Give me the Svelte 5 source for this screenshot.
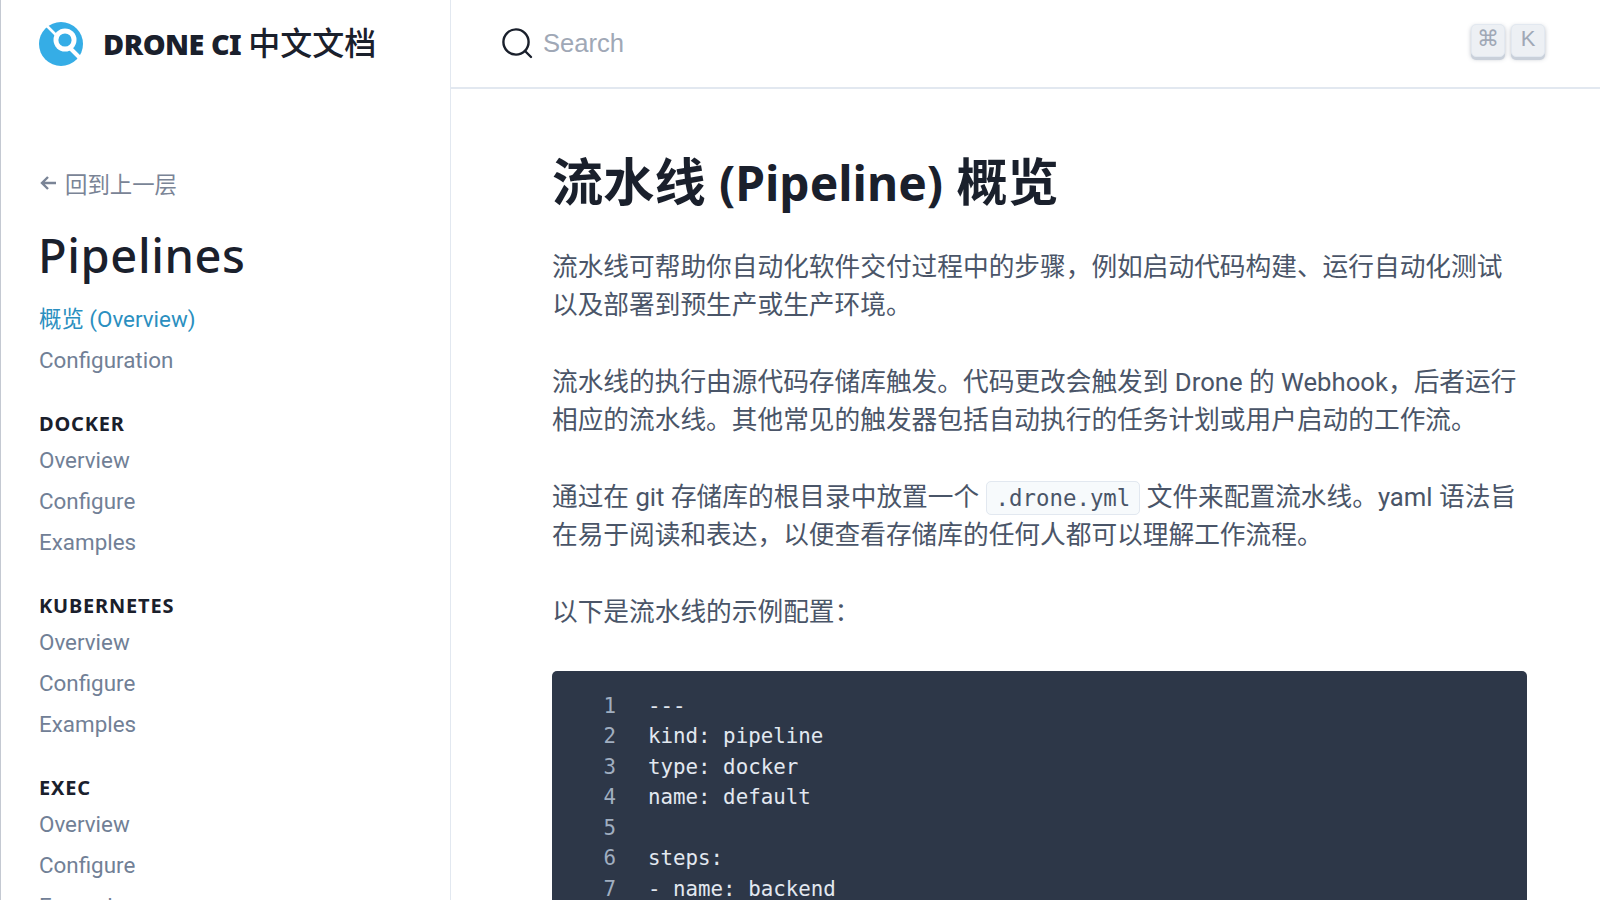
<script>
  const groups = [
    { title: "DOCKER", links: ["Overview", "Configure", "Examples"] },
    { title: "KUBERNETES", links: ["Overview", "Configure", "Examples"] },
    { title: "EXEC", links: ["Overview", "Configure", "Examples"] },
  ];

  const code = ["---", "kind: pipeline", "type: docker", "name: default", "", "steps:", "- name: backend"];
</script>

<div class="page">
  <aside class="sidebar">
    <a class="brand" href="#top">
      <svg class="logo" viewBox="0 0 44 44" width="44" height="44">
        <circle cx="22" cy="22" r="22" fill="#35ade6" />
        <path d="M7 3 L40 36" stroke="#fff" stroke-width="2.6" />
        <circle cx="26" cy="18" r="11.5" fill="#fff" />
        <circle cx="26" cy="18" r="6.6" fill="#35ade6" />
        <path d="M31 25 L43 37" stroke="#fff" stroke-width="2.6" />
      </svg>
      <span class="brand-text">DRONE CI <span class="brand-cjk">中文文档</span></span>
    </a>

    <a class="back" href="#top">
      <svg viewBox="0 0 16 16" width="16" height="16" fill="none" stroke="#7a8496" stroke-width="2.4">
        <path d="M8 2 L2 8 L8 14 M2 8 H16" />
      </svg>
      <span>回到上一层</span>
    </a>

    <h2 class="side-title">Pipelines</h2>

    <nav>
      <a class="link active" href="#top">概览 (Overview)</a>
      <a class="link" href="#top">Configuration</a>
      {#each groups as group}
        <h3>{group.title}</h3>
        {#each group.links as link}
          <a class="link" href="#top">{link}</a>
        {/each}
      {/each}
    </nav>
  </aside>

  <main>
    <header>
      <svg class="search-icon" viewBox="0 0 32 32" width="32" height="32" fill="none" stroke="#1a202c" stroke-width="2.4">
        <circle cx="15" cy="15" r="12.6" />
        <path d="M24 24 L30 30" stroke-linecap="round" />
      </svg>
      <span class="search">Search</span>
      <div class="keys">
        <kbd>⌘</kbd>
        <kbd>K</kbd>
      </div>
    </header>

    <article>
      <h1>流水线 <span class="latin">(Pipeline)</span> 概览</h1>
      <p>流水线可帮助你自动化软件交付过程中的步骤，例如启动代码构建、运行自动化测试以及部署到预生产或生产环境。</p>
      <p>流水线的执行由源代码存储库触发。代码更改会触发到 Drone 的 Webhook，后者运行相应的流水线。其他常见的触发器包括自动执行的任务计划或用户启动的工作流。</p>
      <p>通过在 git 存储库的根目录中放置一个 <code>.drone.yml</code> 文件来配置流水线。yaml 语法旨在易于阅读和表达，以便查看存储库的任何人都可以理解工作流程。</p>
      <p>以下是流水线的示例配置：</p>
      <div class="codeblock">
        {#each code as line, i}
          <div class="row">
            <span class="num">{i + 1}</span>
            <span class="src">{line}</span>
          </div>
        {/each}
      </div>
    </article>
  </main>
</div>

<style>
  :global(body) {
    background: #fff;
    overflow: hidden;
  }

  .page {
    display: flex;
    height: 900px;
    overflow: hidden;
    font-family: Roboto, "Noto Sans CJK SC", sans-serif;
  }

  a {
    text-decoration: none;
  }

  .sidebar {
    width: 451px;
    box-sizing: border-box;
    flex: none;
    padding: 22px 0 0 38px;
    border-left: 1px solid #c4c9d2;
    border-right: 1px solid #e2e8f0;
    overflow: hidden;
  }

  .brand {
    display: flex;
    align-items: center;
    gap: 20px;
    height: 44px;
  }

  .brand-text {
    font-family: "Noto Sans", "Noto Sans CJK SC", sans-serif;
    font-size: 28.8px;
    font-weight: 900;
    color: #1a202c;
    letter-spacing: -0.5px;
    white-space: nowrap;
    margin-top: -6px;
  }

  .brand-cjk {
    font-size: 32px;
    font-weight: 500;
    letter-spacing: 0;
  }

  .back {
    display: flex;
    align-items: center;
    gap: 9px;
    margin-top: 102px;
    height: 30px;
    font-size: 22.4px;
    color: #7a8496;
  }

  .back svg {
    margin-left: 1px;
  }

  .side-title {
    margin: 27px 0 0 -1px;
    font-family: "Noto Sans", sans-serif;
    font-size: 47px;
    line-height: 60px;
    font-weight: 500;
    color: #1a202c;
    letter-spacing: 0.6px;
  }

  nav {
    margin-top: 14px;
  }

  .link {
    display: block;
    height: 41px;
    line-height: 41px;
    font-size: 22.4px;
    color: #718096;
  }

  .active {
    color: #2b8fc0;
  }

  h3 {
    margin: 28px 0 0;
    height: 31px;
    line-height: 30px;
    font-family: "Noto Sans", sans-serif;
    font-size: 20px;
    font-weight: 700;
    letter-spacing: 0.8px;
    color: #1a202c;
  }

  main {
    flex: 1;
    min-width: 0;
  }

  header {
    display: flex;
    align-items: center;
    height: 89px;
    box-sizing: border-box;
    padding: 0 55px 0 50px;
    border-bottom: 2px solid #e2e8f0;
  }

  .search-icon {
    margin-top: -2px;
  }

  .search {
    margin-left: 10px;
    font-family: "Liberation Sans", sans-serif;
    font-size: 25.6px;
    color: #a0a8b6;
  }

  .keys {
    display: flex;
    gap: 6px;
    margin-left: auto;
    margin-top: -6px;
  }

  kbd {
    width: 34px;
    height: 33px;
    display: flex;
    align-items: center;
    justify-content: center;
    box-sizing: border-box;
    padding-bottom: 3px;
    font-family: "Liberation Sans", "DejaVu Sans", sans-serif;
    font-size: 22px;
    color: #a0a8b6;
    background: #edf0f4;
    border: 1px solid #e2e8f0;
    border-radius: 5px;
    box-shadow: 0 3px 0 #c9d0da, 0 2px 4px rgba(100, 110, 130, 0.45);
  }

  article {
    padding: 55.5px 73px 0 101px;
  }

  h1 {
    margin: 0 0 29px;
    font-family: "Noto Sans", "Noto Sans CJK SC", sans-serif;
    font-size: 51.2px;
    line-height: 72px;
    font-weight: 700;
    color: #1a202c;
  }

  .latin {
    font-size: 48px;
  }

  p {
    margin: 0 0 38.4px;
    font-size: 25.7px;
    line-height: 38.4px;
    color: #4a5568;
  }

  code {
    padding: 3px 9px;
    font-family: "DejaVu Sans Mono", monospace;
    font-size: 22.4px;
    line-height: 1;
    background: #f7fafc;
    border: 1px solid #e2e8f0;
    border-radius: 5px;
  }

  .codeblock {
    padding: 20px 0 0;
    margin-top: 39px;
    background: #2d3748;
    border-radius: 5px 5px 0 0;
    height: 300px;
  }

  .row {
    display: flex;
    height: 30.6px;
    line-height: 30.6px;
    font-family: "DejaVu Sans Mono", monospace;
    font-size: 20.8px;
    color: #e2e8f0;
  }

  .num {
    width: 64px;
    text-align: right;
    color: #a0aec0;
  }

  .src {
    margin-left: 32px;
    white-space: pre;
  }
</style>
